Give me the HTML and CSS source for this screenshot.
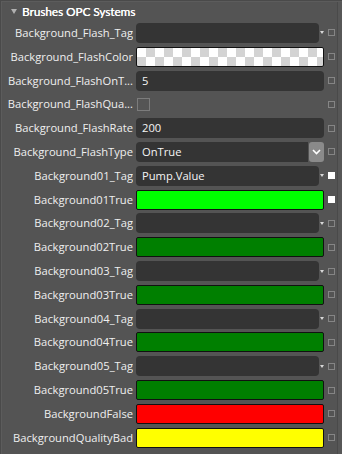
FILE: index.html
```html
<!DOCTYPE html>
<html>
<head>
<meta charset="utf-8">
<link rel="stylesheet" href="styles.css">
</head>
<body>
<div class="panel">
  <div class="header"><span class="caret"></span><span class="title">Brushes OPC Systems</span></div>
  <div class="row"><div class="label">Background_Flash_Tag</div><div class="val"><div class="box"></div><span class="tri"></span></div><span class="mark"></span></div>
  <div class="row"><div class="label">Background_FlashColor</div><div class="val"><div class="swatch checker"></div></div><span class="mark"></span></div>
  <div class="row"><div class="label">Background_FlashOnT...</div><div class="val"><div class="box">5</div></div><span class="mark"></span></div>
  <div class="row"><div class="label">Background_FlashQua...</div><div class="val"><span class="check"></span></div><span class="mark"></span></div>
  <div class="row"><div class="label">Background_FlashRate</div><div class="val"><div class="box">200</div></div><span class="mark"></span></div>
  <div class="row"><div class="label">Background_FlashType</div><div class="val"><div class="box combo">OnTrue</div><span class="btn"><svg width="9" height="6" viewBox="0 0 9 6"><path d="M1 1 L4.5 4.5 L8 1" fill="none" stroke="#fff" stroke-width="1.6"/></svg></span></div><span class="mark"></span></div>
  <div class="row"><div class="label">Background01_Tag</div><div class="val"><div class="box">Pump.Value</div><span class="tri"></span></div><span class="mark on"></span></div>
  <div class="row"><div class="label">Background01True</div><div class="val"><div class="swatch lime"></div></div><span class="mark on"></span></div>
  <div class="row"><div class="label">Background02_Tag</div><div class="val"><div class="box"></div><span class="tri"></span></div><span class="mark"></span></div>
  <div class="row"><div class="label">Background02True</div><div class="val"><div class="swatch green"></div></div><span class="mark"></span></div>
  <div class="row"><div class="label">Background03_Tag</div><div class="val"><div class="box"></div><span class="tri"></span></div><span class="mark"></span></div>
  <div class="row"><div class="label">Background03True</div><div class="val"><div class="swatch green"></div></div><span class="mark"></span></div>
  <div class="row"><div class="label">Background04_Tag</div><div class="val"><div class="box"></div><span class="tri"></span></div><span class="mark"></span></div>
  <div class="row"><div class="label">Background04True</div><div class="val"><div class="swatch green"></div></div><span class="mark"></span></div>
  <div class="row"><div class="label">Background05_Tag</div><div class="val"><div class="box"></div><span class="tri"></span></div><span class="mark"></span></div>
  <div class="row"><div class="label">Background05True</div><div class="val"><div class="swatch green"></div></div><span class="mark"></span></div>
  <div class="row"><div class="label">BackgroundFalse</div><div class="val"><div class="swatch red"></div></div><span class="mark"></span></div>
  <div class="row"><div class="label">BackgroundQualityBad</div><div class="val"><div class="swatch yellow"></div></div><span class="mark"></span></div>
</div>
</body>
</html>
```

FILE: styles.css
```css
html, body {
  margin: 0;
  padding: 0;
  background: #545454;
}
.panel {
  width: 342px;
  height: 454px;
  box-sizing: border-box;
  background: #545454;
  border-top: 1px solid #4a4a4a;
  border-left: 1px solid #4a4a4a;
  box-shadow: inset 1px 1px 0 #5c5c5c, inset -4px 0 0 #575757, inset -5px 0 0 #4a4a4a;
  font-family: "Open Sans", "Noto Sans", sans-serif;
  font-size: 11.2px;
  color: #efefef;
  overflow: hidden;
}
.header {
  height: 20px;
  display: flex;
  align-items: center;
  padding-left: 10px;
}
.caret {
  width: 0;
  height: 0;
  border-left: 3px solid transparent;
  border-right: 3px solid transparent;
  border-top: 5px solid #b0b0b0;
  margin-right: 5px;
}
.title {
  font-family: Lato, "Open Sans", sans-serif;
  font-size: 11.7px;
  font-weight: 400;
  color: #ffffff;
  text-shadow: 0.3px 0 0 #ffffff;
}
.row {
  height: 23.82px;
  display: grid;
  grid-template-columns: 126px 188px 7px;
  column-gap: 3px;
  align-items: center;
  padding-left: 6px;
}
.row > .mark { margin-left: 1px; }
.label {
  text-align: right;
  white-space: nowrap;
  overflow: hidden;
  line-height: 16px;
}
.val {
  display: flex;
  align-items: center;
  height: 20px;
}
.box {
  flex: 1;
  height: 20px;
  background: #343434;
  border-radius: 4px;
  box-sizing: border-box;
  padding-left: 6px;
  line-height: 20px;
  color: #f4f4f4;
}
.box.combo {
  border-radius: 4px 0 0 4px;
  margin-right: 1px;
}
.btn {
  width: 15px;
  height: 20px;
  background: #8a8a8a;
  border-radius: 3px;
  display: flex;
  align-items: center;
  justify-content: center;
}
.tri {
  width: 0;
  height: 0;
  margin: 0 0 0 1px;
  border-left: 2.5px solid transparent;
  border-right: 2.5px solid transparent;
  border-top: 3px solid #d8d8d8;
}
.swatch {
  flex: 1;
  height: 20px;
  box-sizing: border-box;
  border: 1.5px solid #111;
  border-radius: 2px;
}
.checker {
  background-color: #ffffff;
  background-image:
    linear-gradient(45deg, #d3d3d3 25%, transparent 25%, transparent 75%, #d3d3d3 75%),
    linear-gradient(45deg, #d3d3d3 25%, transparent 25%, transparent 75%, #d3d3d3 75%);
  background-size: 18px 18px;
  background-position: 0 0, 9px 9px;
}
.lime { background: #00ff00; }
.green { background: #007f00; }
.red { background: #ff0000; }
.yellow { background: #ffff00; }
.check {
  width: 11px;
  height: 11px;
  border: 1px solid #7c7c7c;
  background: #555;
  margin-left: 1px;
}
.mark {
  width: 7px;
  height: 7px;
  box-sizing: border-box;
  border: 1px solid #858585;
}
.mark.on {
  background: #ffffff;
  border-color: #ffffff;
}
```
